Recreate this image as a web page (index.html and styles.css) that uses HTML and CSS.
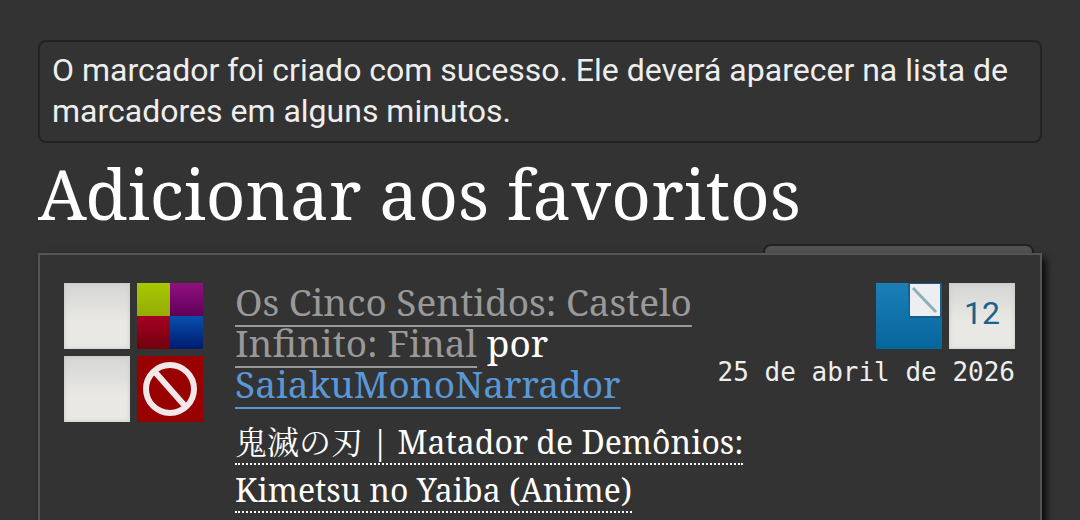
FILE: index.html
```html
<!DOCTYPE html>
<html lang="pt">
<head>
<meta charset="utf-8">
<meta name="viewport" content="width=device-width, initial-scale=1">
<title>Adicionar aos favoritos</title>
<link rel="stylesheet" href="styles.css">
</head>
<body>
<main class="page">
  <div class="notice" role="status">O marcador foi criado com sucesso. Ele deverá aparecer na lista de marcadores em alguns minutos.</div>
  <h1 class="page-title">Adicionar aos favoritos</h1>
  <div class="bookmark">
    <div class="tab"></div>
    <article class="card">
      <div class="tags">
        <span class="tile"></span>
        <span class="tile tile-multi"><i class="lime"></i><i class="purple"></i><i class="red"></i><i class="blue"></i></span>
        <span class="tile"></span>
        <svg class="tile tile-stop" viewBox="0 0 66 66" aria-hidden="true"><circle cx="33" cy="33" r="24"/><path d="M18 16L48 50"/></svg>
      </div>
      <h4 class="heading"><a class="work" href="#">Os Cinco Sentidos: Castelo Infinito: Final</a> por <a class="author" href="#">SaiakuMonoNarrador</a></h4>
      <div class="meta">
        <div class="status">
          <svg class="tile tile-page" viewBox="0 0 66 66" aria-hidden="true"><path class="shade" d="M32 0H66V35H33Z"/><path class="fold" d="M34 1H64V33H34Z"/><path class="crease" d="M37 5L60 29"/></svg>
          <span class="tile tile-count">12</span>
        </div>
        <p class="date">25 de abril de 2026</p>
      </div>
      <h5 class="fandom"><a href="#">鬼滅の刃 | Matador de Demônios: Kimetsu no Yaiba (Anime)</a></h5>
    </article>
  </div>
</main>
</body>
</html>
```
FILE: styles.css
```css
* { box-sizing: border-box; }
body {
  margin: 0;
  background: #333;
  color: #fff;
  font-family: "Noto Serif", "Droid Serif", "Noto Serif CJK JP", "Noto Sans CJK JP", serif;
}
.page { padding: 40px 38px 0; }
.notice {
  padding: 8px 12px 9px;
  border: 2px solid #222;
  border-radius: 8px;
  color: #eee;
  font: 32px/41px Roboto, sans-serif;
}
.page-title {
  margin: 8px 0 0;
  font-size: 69px;
  font-weight: 400;
  line-height: 84px;
}
.bookmark { position: relative; padding-top: 18px; }
.tab {
  position: absolute;
  top: 9px;
  right: 8px;
  width: 271px;
  height: 40px;
  border: 2px solid #222;
  border-radius: 8px;
  background: linear-gradient(#555, #444);
}
.card {
  position: relative;
  display: grid;
  grid-template-columns: 155px 1fr auto;
  column-gap: 16px;
  padding: 28px 25px 24px 24px;
  border: 2px solid #555;
  background: #333;
  box-shadow: 4px 4px 8px -1px #000;
}
.tags {
  display: grid;
  grid-template-columns: 66px 66px;
  grid-auto-rows: 66px;
  gap: 7px;
}
.tile {
  display: block;
  width: 66px;
  height: 66px;
  background: linear-gradient(#d5d5d3, #e9e8e5 60%);
  box-shadow: inset 0 0 4px #c4c4c2;
}
.tile-multi {
  display: grid;
  grid-template-columns: 1fr 1fr;
  box-shadow: none;
}
.lime { background: linear-gradient(#a8c800, #94ac08); }
.purple { background: linear-gradient(#901080, #600058); }
.red { background: linear-gradient(#a50022, #72000c); }
.blue { background: linear-gradient(#0650ac, #001a70); }
.tile-stop {
  background: #900;
  box-shadow: none;
  fill: none;
  stroke: #f2e8ea;
  stroke-width: 6;
}
.heading {
  margin: -2px 0 0;
  font-size: 37px;
  font-weight: 400;
  line-height: 41px;
}
a { color: inherit; text-decoration: none; }
.work,
.author {
  text-decoration: underline 2px;
  text-decoration-skip-ink: none;
  text-underline-offset: 9px;
}
.work { color: #999; }
.author { color: #5998d6; }
.meta { text-align: right; }
.status { display: flex; justify-content: flex-end; gap: 7px; }
.tile-page {
  background: linear-gradient(#1c7fb8, #04669c);
  box-shadow: none;
}
.shade { fill: #155f8a; }
.fold { fill: #eceef2; }
.crease { fill: none; stroke: #8fb0b8; stroke-width: 3; }
.tile-count {
  color: #16638c;
  font: 32px/60px Roboto, sans-serif;
  text-align: center;
}
.date {
  margin: 7px 0 0;
  color: #eee;
  font: 26px/32px "DejaVu Sans Mono", monospace;
}
.fandom {
  grid-column: 2 / 4;
  max-width: 80%;
  margin: -4px 0 0;
  font-size: 32px;
  font-weight: 400;
  line-height: 48px;
}
.fandom a { border-bottom: 2px dotted; }
```
